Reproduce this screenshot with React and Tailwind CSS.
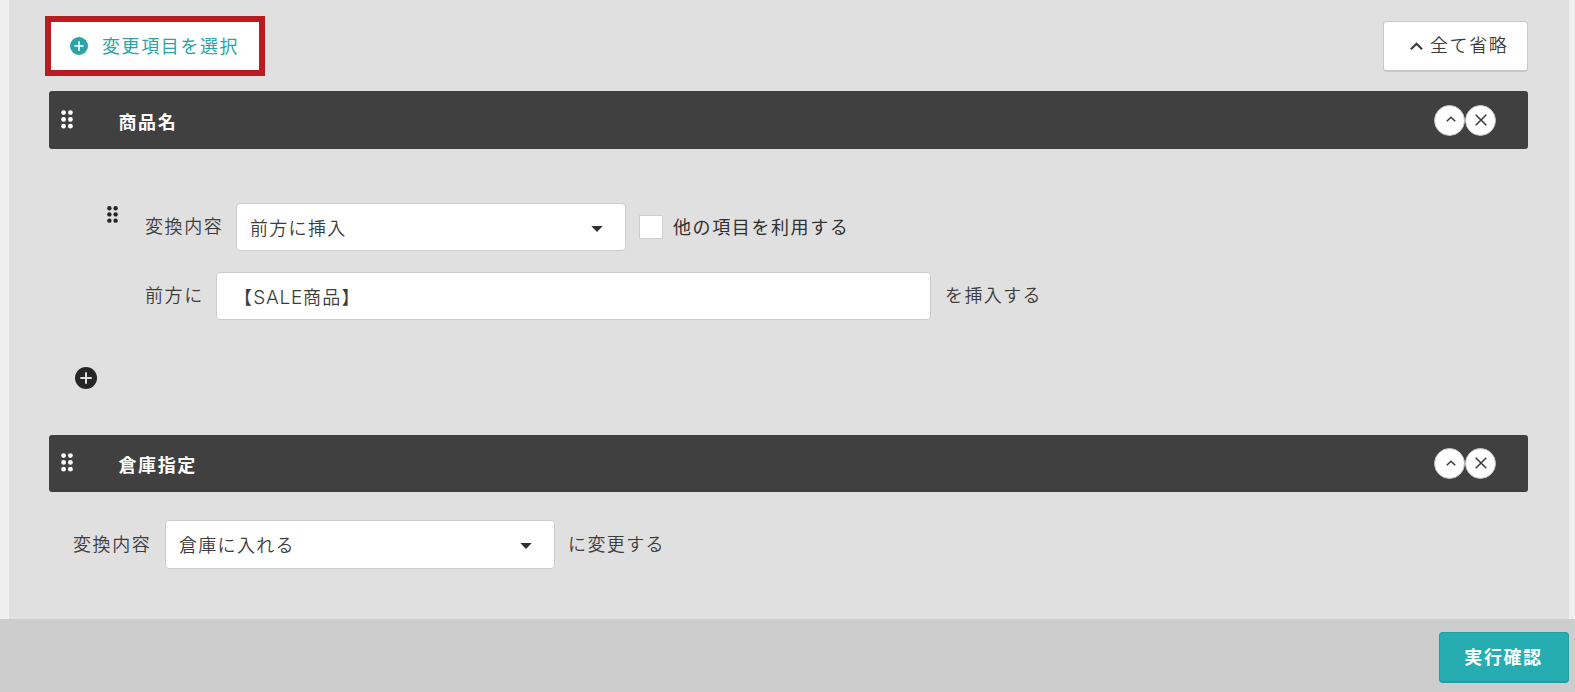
import React from 'react';

function Grip({ className }) {
  return (
    <svg viewBox="0 0 12 19" fill="currentColor" className={className}>
      {[2.6, 9.4].map((x) =>
        [2.6, 9.4, 16.2].map((y) => <circle key={x + '-' + y} cx={x} cy={y} r="2.4" />)
      )}
    </svg>
  );
}

function PlusCircle({ className, stroke }) {
  return (
    <svg viewBox="0 0 22 22" className={className}>
      <circle cx="11" cy="11" r="11" fill="currentColor" />
      <path d="M11 5.3v11.4M5.3 11h11.4" stroke={stroke} strokeWidth="2" fill="none" />
    </svg>
  );
}

function RoundButton({ children, label }) {
  return (
    <button
      aria-label={label}
      className="flex size-[31px] items-center justify-center rounded-full border border-[#c4c4c4] bg-white text-[#3a3a3a]"
    >
      {children}
    </button>
  );
}

function SectionHeader({ title, className }) {
  return (
    <header
      className={'flex items-center rounded-[3px] bg-[#404040] pr-8 pl-3 text-white ' + className}
    >
      <Grip className="mb-[2px] h-[19px] w-3" />
      <h2 className="mt-px ml-[45.5px] flex-1 font-bold">{title}</h2>
      <div className="flex">
        <RoundButton label="省略">
          <svg viewBox="0 0 10 6" className="mb-[2px] ml-[2px] h-[6px] w-[10px]" fill="none" stroke="currentColor" strokeWidth="1.5">
            <path d="M0.8 5.3 5 1.2l4.2 4.1" />
          </svg>
        </RoundButton>
        <RoundButton label="削除">
          <svg viewBox="0 0 12 12" className="mb-px size-3" fill="none" stroke="currentColor" strokeWidth="1.5">
            <path d="M0.7 0.7l10.6 10.6M11.3 0.7 0.7 11.3" />
          </svg>
        </RoundButton>
      </div>
    </header>
  );
}

function SelectBox({ value, className }) {
  return (
    <div
      className={
        'flex w-[390px] items-center justify-between rounded-[4px] border border-[#cdcdcd] bg-white pr-[22px] pl-[13px] tracking-[1.3px] ' +
        className
      }
    >
      <span className="mb-px">{value}</span>
      <svg viewBox="0 0 12 6" className="mt-[3px] h-[6px] w-3" fill="#303030">
        <path d="M0.3 0h11.4L6 6z" />
      </svg>
    </div>
  );
}

export default function App() {
  return (
    <div className="flex h-[692px] w-[1575px] flex-col overflow-hidden bg-[#efefef] font-['Noto_Sans_CJK_JP',sans-serif] text-[18px] leading-[26px] font-[350] tracking-[1.6px] whitespace-nowrap text-[#3c3c3c]">
      <main className="mr-[6px] ml-[9px] flex h-[619px] flex-col bg-[#e0e0e0] pr-[41px] pl-10">
        <div className="flex h-[91px] items-start justify-between">
          <button className="mt-4 -ml-1 flex h-[60px] w-[220px] items-center border-[6px] border-[#ba1b20] bg-white pl-[19px] font-normal text-[#2ba3a7]">
            <PlusCircle className="size-[18px]" stroke="#fff" />
            <span className="mb-[2px] ml-[14px]">変更項目を選択</span>
          </button>
          <button className="mt-[21px] flex h-[51px] w-[145px] items-center rounded-[4px] border border-b-2 border-[#c8c8c8] bg-white pl-[26px]">
            <svg viewBox="0 0 13 8" className="mb-px h-2 w-[13px]" fill="none" stroke="currentColor" strokeWidth="2.2">
              <path d="M0.9 7.2 6.5 1.7l5.6 5.5" />
            </svg>
            <span className="mb-1 ml-[7px]">全て省略</span>
          </button>
        </div>

        <SectionHeader title="商品名" className="h-[58px]" />

        <section className="flex h-[286px] flex-col">
          <div className="mt-[54px] flex h-12 items-center pl-[58px]">
            <Grip className="mb-[25px] h-[19px] w-[11px] text-[#262626]" />
            <span className="mt-[-4px] ml-[27px] w-[91px]">変換内容</span>
            <SelectBox value="前方に挿入" className="h-12" />
            <span className="ml-[13px] size-6 border border-[#cfcfcf] bg-white" />
            <span className="mb-[2px] ml-[10px] font-normal text-[#303030]">他の項目を利用する</span>
          </div>
          <div className="mt-[21px] flex h-12 items-center pl-24">
            <span className="mt-[-4px] w-[71px]">前方に</span>
            <div className="flex h-12 w-[715px] items-center rounded-[4px] border border-[#cdcdcd] bg-white pl-[17px] tracking-[1.3px]">
              <span>
                【<span className="font-['Inter',sans-serif] text-[19px] leading-none font-light tracking-[0.7px]">SALE</span>商品】
              </span>
            </div>
            <span className="mt-[-4px] ml-[14px] tracking-[1.4px]">を挿入する</span>
          </div>
          <PlusCircle className="mt-[47px] ml-[26px] size-[22px] text-[#262626]" stroke="#e0e0e0" />
        </section>

        <SectionHeader title="倉庫指定" className="h-[57px]" />

        <section className="mt-7 flex h-[49px] items-center pl-6">
          <span className="mt-[-4px] w-[92px]">変換内容</span>
          <SelectBox value="倉庫に入れる" className="h-[49px]" />
          <span className="mt-[-4px] ml-[13px] tracking-[1.4px]">に変更する</span>
        </section>
      </main>

      <footer className="flex flex-1 items-start justify-end bg-[#cdcdcd] pt-[13px] pr-[6px]">
        <button className="flex h-[51px] w-[130px] items-center justify-center rounded-[4px] border border-b-2 border-[#229da1] bg-[#25adb1] pr-px pb-[2px] font-bold text-white">
          実行確認
        </button>
      </footer>
    </div>
  );
}
